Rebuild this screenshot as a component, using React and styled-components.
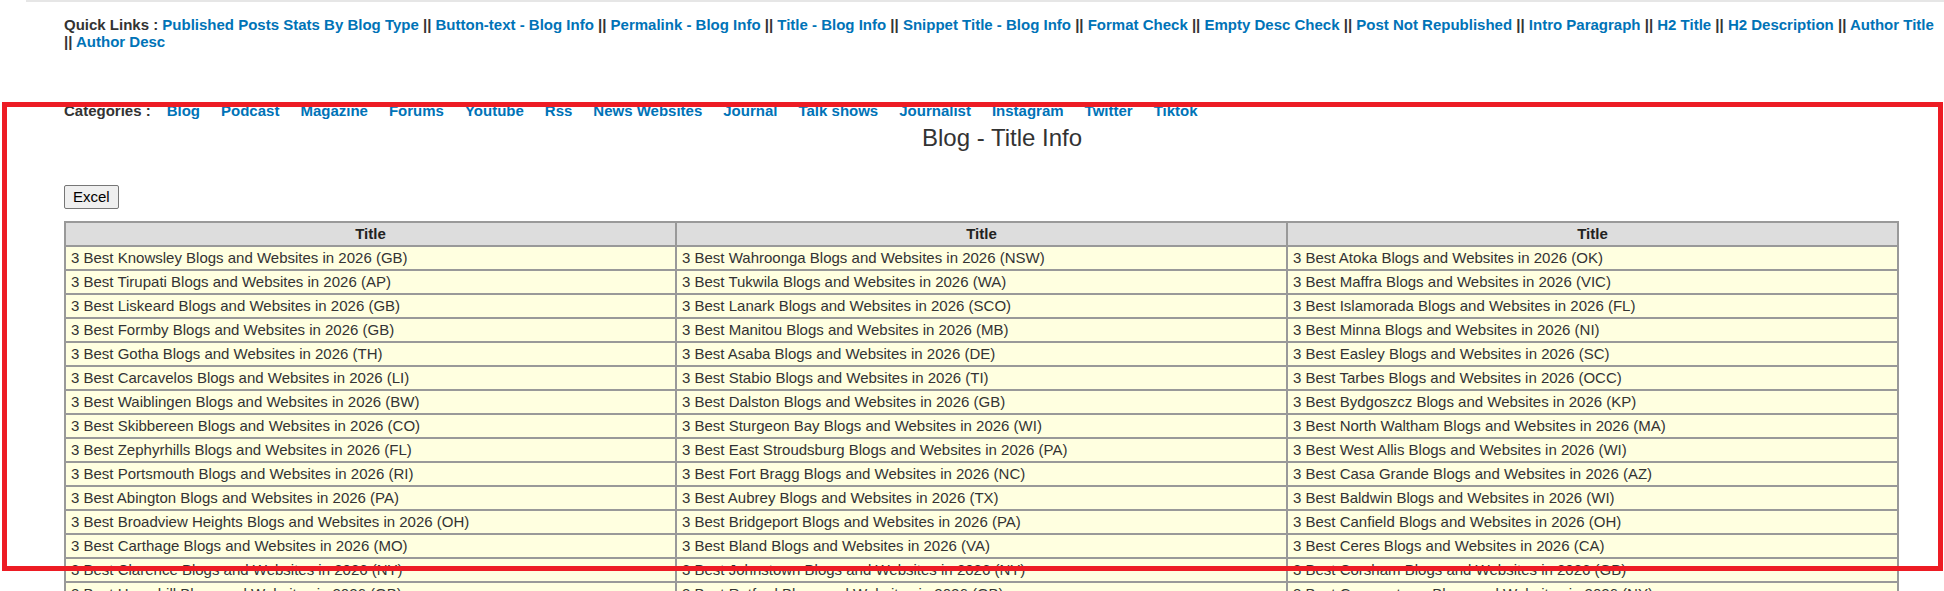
import React from 'react'
import styled, { createGlobalStyle } from 'styled-components'

const GlobalStyle = createGlobalStyle`
    html, body {
        margin: 0;
        padding: 0;
        background: #fff;
    }
    body {
        font-family: "Liberation Sans", Arial, sans-serif;
        color: #333;
        overflow: hidden;
    }
`

const Page = styled.div`
    position: relative;
    width: 1944px;
    height: 591px;
    overflow: hidden;
`

const TopRule = styled.div`
    height: 2px;
    margin-left: 26px;
    background: #e6e6e6;
`

const QuickLinks = styled.div`
    padding: 14px 0 0 64px;
    font-size: 15px;
    font-weight: bold;
    line-height: 17.25px;
`

const Label = styled.span`
    color: #333;
`

const Link = styled.a`
    color: #0073b7;
    text-decoration: none;
    cursor: pointer;
`

const Sep = styled.span`
    color: #333;
`

const Categories = styled.div`
    display: flex;
    align-items: baseline;
    gap: 21px;
    margin-top: 51px;
    padding-left: 64px;
    font-size: 15px;
    font-weight: bold;
    line-height: 17px;
`

const CatLabel = styled.span`
    color: #333;
    margin-right: -5px;
`

const Heading = styled.h2`
    margin: 5px 0 0;
    padding-left: 60px;
    text-align: center;
    font-size: 24px;
    font-weight: normal;
    line-height: 27px;
    color: #333;
`

const Toolbar = styled.div`
    padding-left: 64px;
    margin-top: 34px;
`

const ExcelButton = styled.button`
    height: 24px;
    padding: 0 8px;
    font-family: "Liberation Sans", Arial, sans-serif;
    font-size: 15px;
    color: #000;
    background: #efefef;
    border: 1px solid #767676;
    border-radius: 2px;
`

const Table = styled.table`
    margin: 12px 0 0 64px;
    width: 1835px;
    table-layout: fixed;
    border-collapse: separate;
    border-spacing: 0;
    border: 1px solid #999;
    font-size: 15px;
    line-height: 18px;
`

const Th = styled.th`
    background: #dddddd;
    border: 1px solid #999;
    padding: 2px 5px;
    font-weight: bold;
    color: #222;
    text-align: center;
`

const Td = styled.td`
    background: #ffffe0;
    border: 1px solid #999;
    padding: 2px 5px;
    color: #333;
    white-space: nowrap;
    overflow: hidden;
`

const Highlight = styled.div`
    position: absolute;
    top: 102px;
    left: 2px;
    width: 1941px;
    height: 469px;
    box-sizing: border-box;
    border: 5px solid #ed1c24;
    pointer-events: none;
`

const quickLinks = [
    'Published Posts Stats By Blog Type',
    'Button-text - Blog Info',
    'Permalink - Blog Info',
    'Title - Blog Info',
    'Snippet Title - Blog Info',
    'Format Check',
    'Empty Desc Check',
    'Post Not Republished',
    'Intro Paragraph',
    'H2 Title',
    'H2 Description',
    'Author Title',
    'Author Desc',
]

const categories = [
    'Blog', 'Podcast', 'Magazine', 'Forums', 'Youtube', 'Rss', 'News Websites',
    'Journal', 'Talk shows', 'Journalist', 'Instagram', 'Twitter', 'Tiktok',
]

const rows = [
    [['Knowsley', 'GB'], ['Wahroonga', 'NSW'], ['Atoka', 'OK']],
    [['Tirupati', 'AP'], ['Tukwila', 'WA'], ['Maffra', 'VIC']],
    [['Liskeard', 'GB'], ['Lanark', 'SCO'], ['Islamorada', 'FL']],
    [['Formby', 'GB'], ['Manitou', 'MB'], ['Minna', 'NI']],
    [['Gotha', 'TH'], ['Asaba', 'DE'], ['Easley', 'SC']],
    [['Carcavelos', 'LI'], ['Stabio', 'TI'], ['Tarbes', 'OCC']],
    [['Waiblingen', 'BW'], ['Dalston', 'GB'], ['Bydgoszcz', 'KP']],
    [['Skibbereen', 'CO'], ['Sturgeon Bay', 'WI'], ['North Waltham', 'MA']],
    [['Zephyrhills', 'FL'], ['East Stroudsburg', 'PA'], ['West Allis', 'WI']],
    [['Portsmouth', 'RI'], ['Fort Bragg', 'NC'], ['Casa Grande', 'AZ']],
    [['Abington', 'PA'], ['Aubrey', 'TX'], ['Baldwin', 'WI']],
    [['Broadview Heights', 'OH'], ['Bridgeport', 'PA'], ['Canfield', 'OH']],
    [['Carthage', 'MO'], ['Bland', 'VA'], ['Ceres', 'CA']],
    [['Clarence', 'NY'], ['Johnstown', 'NY'], ['Corsham', 'GB']],
    [['Haverhill', 'GB'], ['Retford', 'GB'], ['Cooperstown', 'NY']],
]

const title = ([place, region]) => `3 Best ${place} Blogs and Websites in 2026 (${region})`

export default function App() {
    return (
        <Page>
            <GlobalStyle />
            <TopRule />
            <QuickLinks>
                <Label>Quick Links : </Label>
                {quickLinks.map((l, i) => (
                    <React.Fragment key={l}>
                        {i > 0 && <Sep> || </Sep>}
                        <Link>{l}</Link>
                    </React.Fragment>
                ))}
            </QuickLinks>
            <Categories>
                <CatLabel>Categories :</CatLabel>
                {categories.map(c => <Link key={c}>{c}</Link>)}
            </Categories>
            <Heading>Blog - Title Info</Heading>
            <Toolbar>
                <ExcelButton>Excel</ExcelButton>
            </Toolbar>
            <Table>
                <thead>
                    <tr>
                        <Th>Title</Th>
                        <Th>Title</Th>
                        <Th>Title</Th>
                    </tr>
                </thead>
                <tbody>
                    {rows.map((r, i) => (
                        <tr key={i}>
                            {r.map(cell => <Td key={cell[0]}>{title(cell)}</Td>)}
                        </tr>
                    ))}
                </tbody>
            </Table>
            <Highlight />
        </Page>
    )
}
